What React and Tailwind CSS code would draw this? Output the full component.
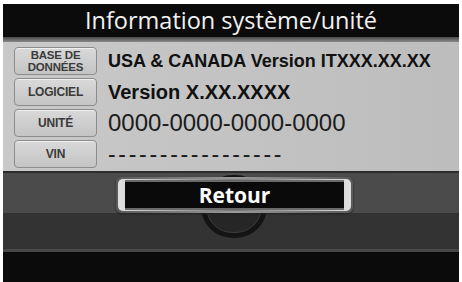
import React from "react";

const rows = [
  {
    label: ["BASE DE", "DONNÉES"],
    value: "USA & CANADA Version ITXXX.XX.XX",
    cls: "text-[18px] font-bold text-[#111]",
  },
  { label: ["LOGICIEL"], value: "Version X.XX.XXXX", cls: "text-[20px] font-bold text-[#111]" },
  { label: ["UNITÉ"], value: "0000-0000-0000-0000", cls: "text-[24px] font-normal text-[#1c1c1c]" },
  {
    label: ["VIN"],
    value: "-----------------",
    cls: "text-[23px] font-normal text-[#1c1c1c] tracking-[2.7px]",
  },
];

const Tag = ({ lines }) => (
  <div className="w-[83px] h-[28px] shrink-0 rounded-[4px] border border-[#8c8c8c] bg-gradient-to-b from-[#d9d9d9] to-[#c4c4c4] shadow-[inset_0_1px_0_#efefef] flex flex-col items-center justify-center">
    {lines.map((l) => (
      <span
        key={l}
        className={`text-[#3a3a3a] font-bold tracking-[-0.2px] ${lines.length > 1 ? "text-[11.5px] leading-[12px]" : "text-[12px] leading-[13px]"}`}
      >
        {l}
      </span>
    ))}
  </div>
);

export default function App() {
  return (
    <div
      className="w-[462px] h-[282px] bg-white pt-[4px] px-[3px] overflow-hidden"
      style={{ fontFamily: '"Liberation Sans", Arial, sans-serif' }}
    >
      <div className="flex flex-col h-full">
        {/* titre */}
        <div className="h-[33px] bg-[#0b0b0b] flex items-center justify-center">
          <span
            className="text-[#f2f2f2] text-[23.5px] leading-none"
            style={{ fontFamily: '"Open Sans", sans-serif' }}
          >
            Information système/unité
          </span>
        </div>
        <div className="h-[5px] bg-gradient-to-b from-[#4a4a4a] to-[#8a8a8a]" />

        {/* panneau infos */}
        <div className="h-[129px] bg-gradient-to-r from-[#c9c9c9] to-[#bdbdbd] px-[11px] pt-[5px] flex flex-col gap-[3px]">
          {rows.map((r) => (
            <div key={r.value} className="flex items-center gap-[11px] h-[28px]">
              <Tag lines={r.label} />
              <span className={`leading-none whitespace-nowrap ${r.cls}`}>{r.value}</span>
            </div>
          ))}
        </div>

        {/* zone bouton */}
        <div className="relative flex-1 flex flex-col">
          <div className="h-[2px] bg-[#2c2c2c]" />
          <div className="h-[40px] bg-[#4b4b4b]" />
          <div className="h-[36px] bg-[#333333]" />
          <div className="h-[3px] bg-[#474747]" />
          <div className="flex-1 bg-[#0b0b0b]" />

          {/* molette */}
          <div className="absolute left-[198px] top-[4px] w-[66px] h-[63px] rounded-full bg-[#141414] p-[5px]">
            <div className="w-full h-full rounded-full bg-[#262626] border border-[#3c3c3c]" />
          </div>

          {/* bouton Retour */}
          <div className="absolute left-[113px] top-[6px] w-[237px] h-[36px] rounded-[6px] bg-gradient-to-r from-[#5a5a5a] via-[#9a9a9a] to-[#5a5a5a] p-[2px] shadow-[0_1px_2px_#222]">
            <div className="h-full rounded-[5px] bg-gradient-to-r from-[#e0e0e0] via-[#777] to-[#e0e0e0] px-[7px] py-[1px]">
              <div className="h-full bg-[#0a0a0a] border-y-[2px] border-[#6a6a6a] flex items-center justify-center">
                <span
                  className="text-white font-bold text-[21px] leading-none"
                  style={{ fontFamily: '"Open Sans", sans-serif' }}
                >
                  Retour
                </span>
              </div>
            </div>
          </div>
        </div>
      </div>
    </div>
  );
}
